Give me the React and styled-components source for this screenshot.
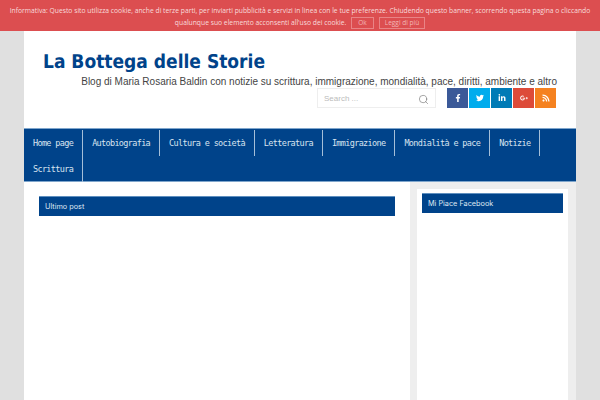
import styled, { createGlobalStyle } from 'styled-components';
import { Search } from 'lucide-react';
import { FaFacebookF, FaTwitter, FaLinkedinIn, FaGooglePlusG, FaRss } from 'react-icons/fa';

const Global = createGlobalStyle`
  html, body {
    margin: 0;
    height: 400px;
    overflow: hidden;
    background: #e0e0e0;
  }
`

const CookieBar = styled.div`
  position: absolute;
  top: 0;
  left: 0;
  right: 0;
  height: 31px;
  box-sizing: border-box;
  padding: 5px 8px 0;
  background: #dc4e50;
  color: #f8dcdc;
  font: 6.75px/12px "Open Sans", sans-serif;
  text-align: center;
`

const CookieButton = styled.span`
  display: inline-block;
  margin-left: 5px;
  padding: 0 ${props => props.$wide ? '5px' : '6px'};
  height: 10px;
  line-height: 10px;
  border: 1px solid #e98486;
  color: #f2b8b8;
  font-size: 6.5px;
`

const Wrapper = styled.div`
  width: 552px;
  height: 400px;
  margin: 0 auto;
  background: #fff;
  display: flex;
  flex-direction: column;
`

const Header = styled.header`
  height: 128px;
  box-sizing: border-box;
  padding: 51px 20px 0 19px;
  display: flex;
  flex-direction: column;
`

const Title = styled.h1`
  margin: 0;
  font: bold 19px/23px "DejaVu Sans", sans-serif;
  font-stretch: condensed;
  text-rendering: geometricPrecision;
  color: #00438a;
`

const Tagline = styled.p`
  margin: 0 -1px 0 0;
  font: 10px/15px "Liberation Sans", sans-serif;
  color: #444;
  text-align: right;
  white-space: nowrap;
`

const Tools = styled.div`
  display: flex;
  justify-content: flex-end;
  margin-top: -1px;
`

const SearchBox = styled.div`
  width: 119px;
  height: 20px;
  box-sizing: border-box;
  border: 1px solid #eee;
  margin-right: 11px;
  padding: 0 6px;
  display: flex;
  align-items: center;
  justify-content: space-between;
  font: 8px "Liberation Sans", sans-serif;
  color: #bbb;
  svg {
    color: #666;
    margin-top: 3px;
  }
`

const Social = styled.div`
  display: flex;
  gap: 1px;
`

const SocialLink = styled.a`
  width: 21px;
  height: 20px;
  display: flex;
  align-items: center;
  justify-content: center;
  background: ${props => props.$color};
  color: #fff;
  font-size: 8px;
`

const Nav = styled.nav`
  height: 54px;
  box-sizing: border-box;
  padding: 1px 0;
  background: #00438a;
  border-top: 1px solid #7fa6cc;
  border-bottom: 1px solid #7fa6cc;
  display: flex;
  flex-wrap: wrap;
  align-content: flex-start;
`

const NavItem = styled.a`
  height: 26px;
  padding: 0 9px;
  border-right: 1px solid #a5bfd9;
  color: #d9e4f0;
  font: 8.5px/26px "DejaVu Sans Mono", monospace;
  letter-spacing: -0.66px;
`

const NavBreak = styled.div`
  flex-basis: 100%;
  height: 0;
`

const Body = styled.div`
  flex: 1;
  display: flex;
`

const Main = styled.main`
  width: 386px;
  box-sizing: border-box;
  padding: 14px 15px 0;
`

const Sidebar = styled.aside`
  flex: 1;
  background: #eee;
  padding: 7px 8px 0 7px;
`

const Widget = styled.div`
  height: 100%;
  box-sizing: border-box;
  background: #fff;
  padding: 4px 5px 0;
`

const BlockTitle = styled.div`
  height: 20px;
  box-sizing: border-box;
  padding-left: 6px;
  background: #00438a;
  border-top: 1px solid #5f8fbf;
  color: #dfe8f2;
  font: 7.3px/19px Inter, sans-serif;
`

export default function App() {
  return (
    <>
      <Global />
      <Wrapper>
        <Header>
          <Title>La Bottega delle Storie</Title>
          <Tagline>Blog di Maria Rosaria Baldin con notizie su scrittura, immigrazione, mondialità, pace, diritti, ambiente e altro</Tagline>
          <Tools>
            <SearchBox>
              Search ...
              <Search size={11} strokeWidth={1.25} />
            </SearchBox>
            <Social>
              <SocialLink $color="#3b5998"><FaFacebookF /></SocialLink>
              <SocialLink $color="#00aced"><FaTwitter /></SocialLink>
              <SocialLink $color="#007bb6"><FaLinkedinIn /></SocialLink>
              <SocialLink $color="#dd4b39"><FaGooglePlusG /></SocialLink>
              <SocialLink $color="#f58220"><FaRss /></SocialLink>
            </Social>
          </Tools>
        </Header>
        <Nav>
          <NavItem>Home page</NavItem>
          <NavItem>Autobiografia</NavItem>
          <NavItem>Cultura e società</NavItem>
          <NavItem>Letteratura</NavItem>
          <NavItem>Immigrazione</NavItem>
          <NavItem>Mondialità e pace</NavItem>
          <NavItem>Notizie</NavItem>
          <NavBreak />
          <NavItem>Scrittura</NavItem>
        </Nav>
        <Body>
          <Main>
            <BlockTitle>Ultimo post</BlockTitle>
          </Main>
          <Sidebar>
            <Widget>
              <BlockTitle>Mi Piace Facebook</BlockTitle>
            </Widget>
          </Sidebar>
        </Body>
      </Wrapper>
      <CookieBar>
        Informativa: Questo sito utilizza cookie, anche di terze parti, per inviarti pubblicità e servizi in linea con le tue preferenze. Chiudendo questo banner, scorrendo questa pagina o cliccando qualunque suo elemento acconsenti all'uso dei cookie.
        <CookieButton>Ok</CookieButton>
        <CookieButton $wide>Leggi di più</CookieButton>
      </CookieBar>
    </>
  );
}
